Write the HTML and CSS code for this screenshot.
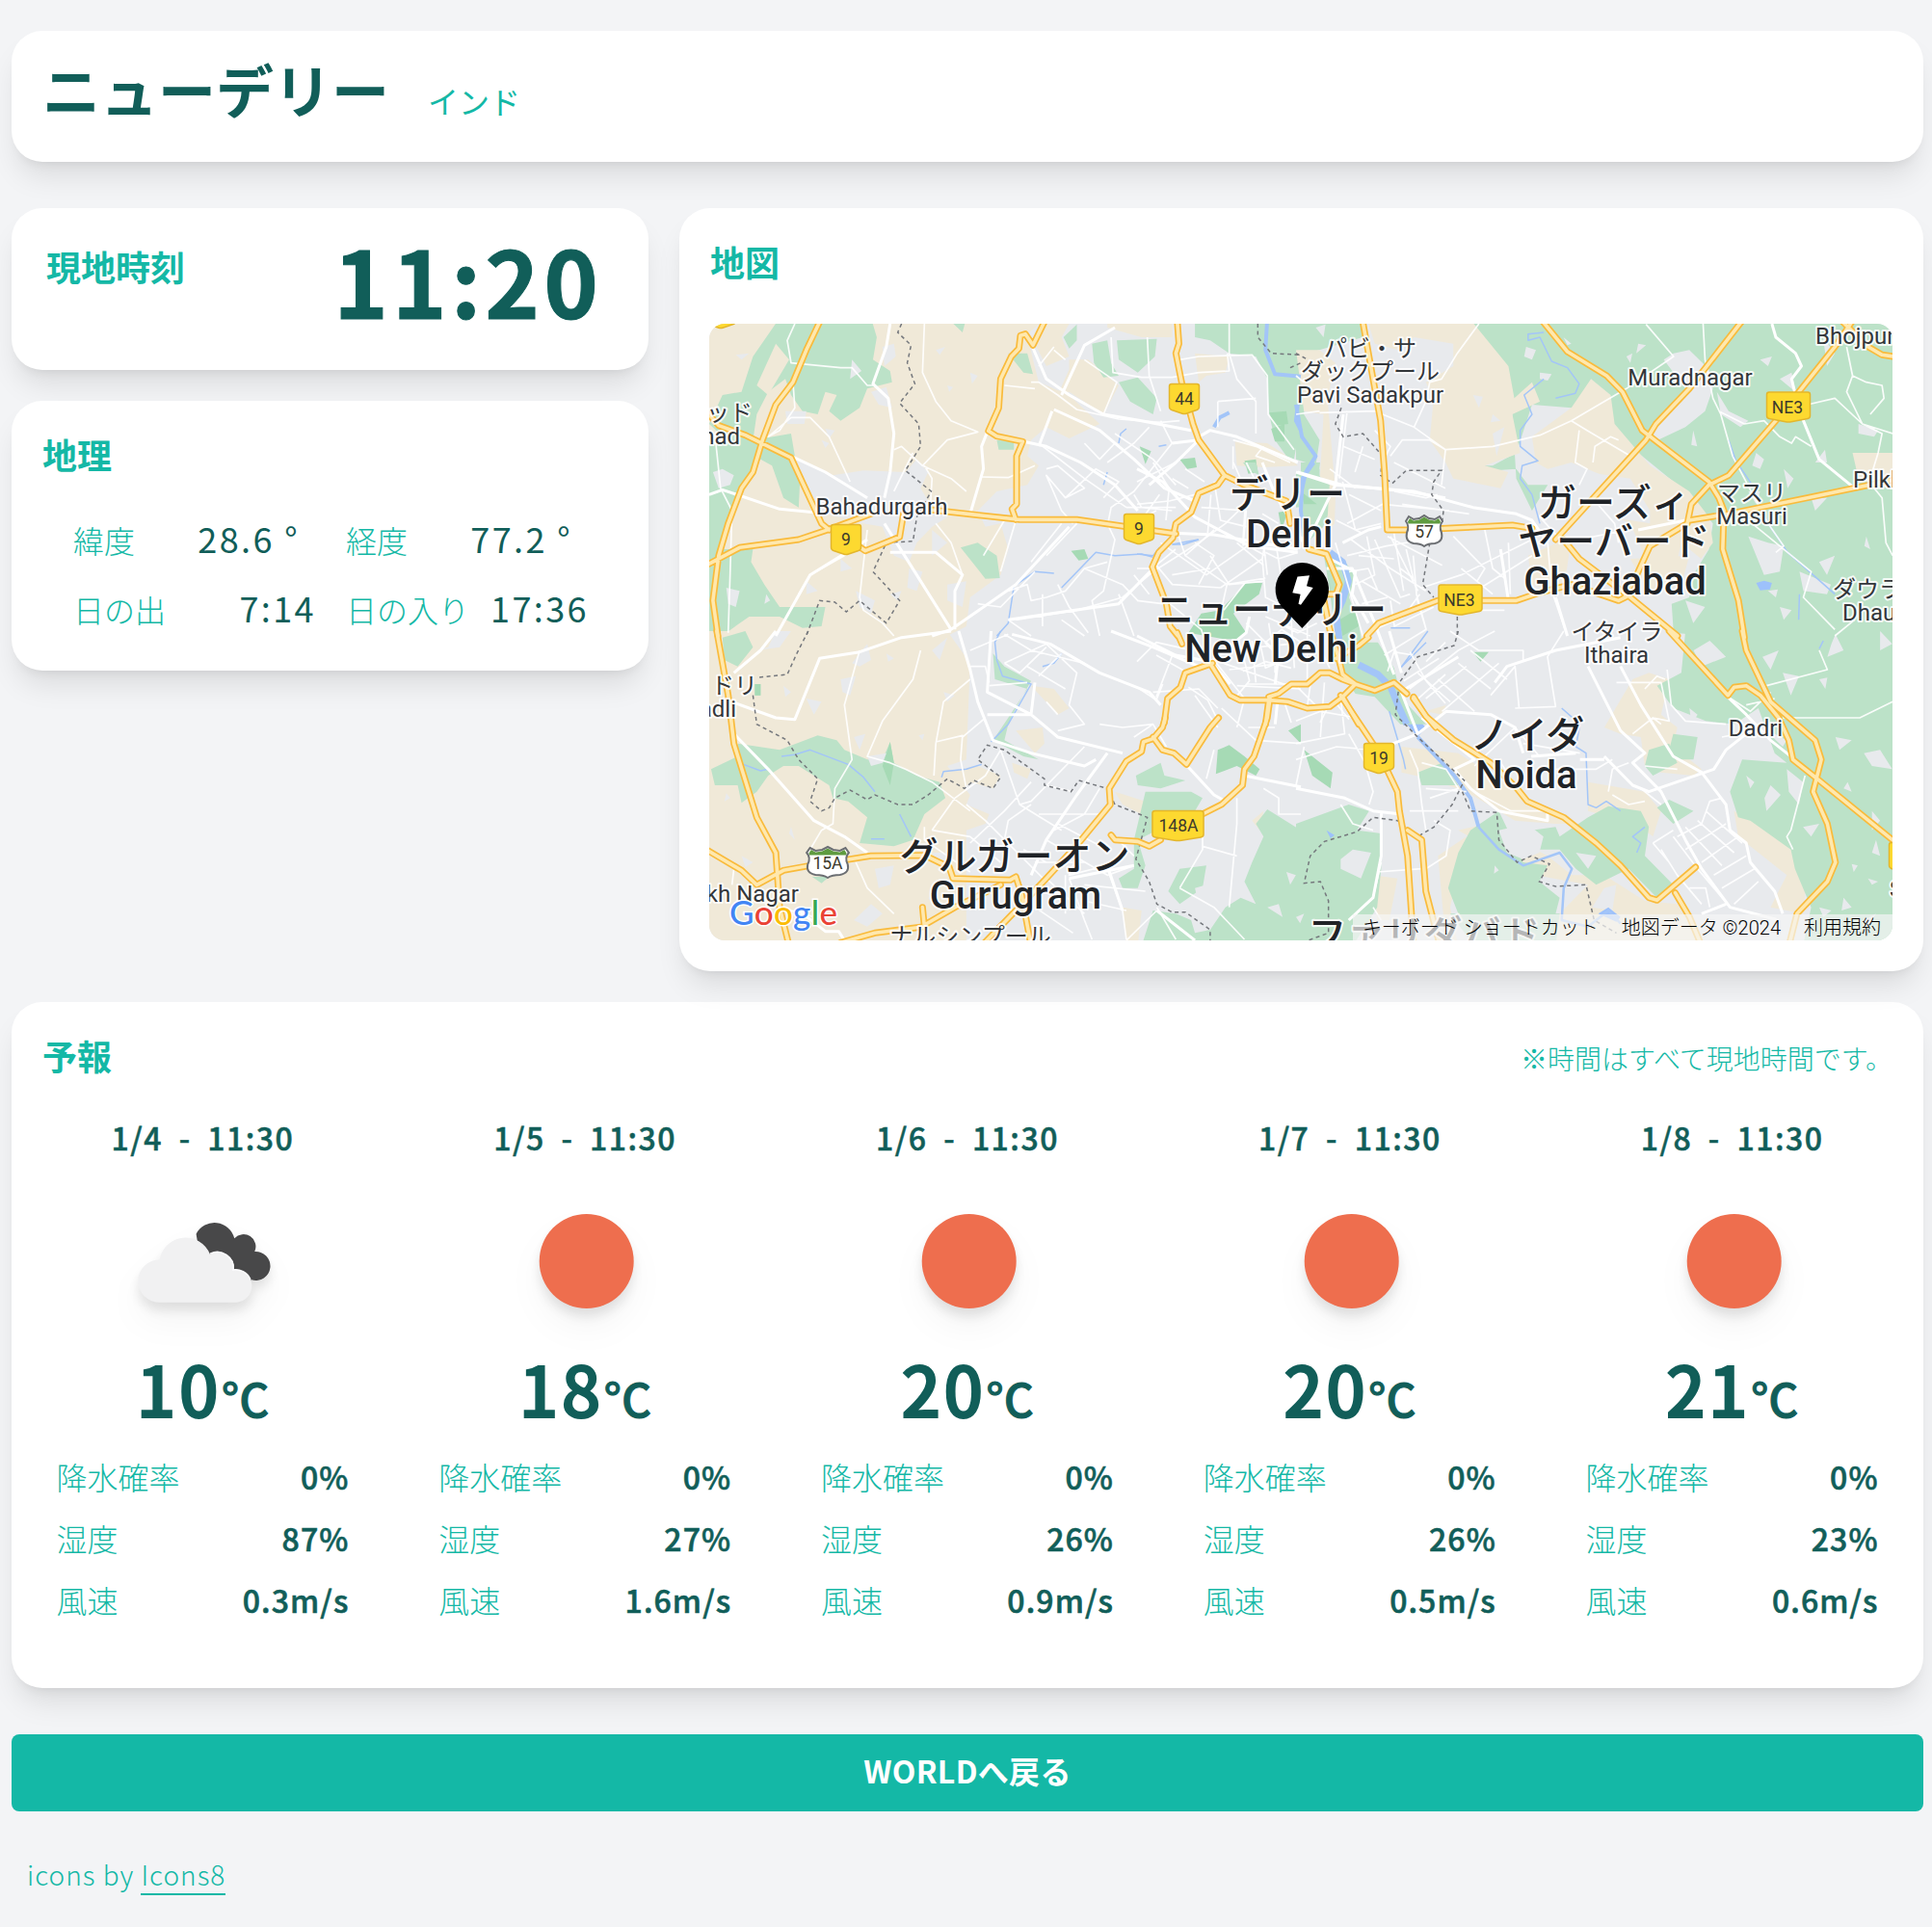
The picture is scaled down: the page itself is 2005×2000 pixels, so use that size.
FILE: index.html
```html
<!DOCTYPE html>
<html lang="ja">
<head>
<meta charset="utf-8">
<title>ニューデリー</title>
<link rel="stylesheet" href="styles.css">
</head>
<body>
<header class="card header">
  <h1 class="city">ニューデリー</h1>
  <span class="country">インド</span>
</header>

<main class="overview">
  <div class="side">
    <section class="card clock">
      <h2 class="heading">現地時刻</h2>
      <span class="time">11:20</span>
    </section>
    <section class="card geo">
      <h2 class="heading">地理</h2>
      <dl class="geo-grid">
        <div class="pair"><dt>緯度</dt><dd class="deg">28.6 °</dd></div>
        <div class="pair"><dt>経度</dt><dd class="deg">77.2 °</dd></div>
        <div class="pair"><dt>日の出</dt><dd>7:14</dd></div>
        <div class="pair"><dt>日の入り</dt><dd>17:36</dd></div>
      </dl>
    </section>
  </div>

  <section class="card map-card">
    <h2 class="heading">地図</h2>
    <div class="map">
      <svg class="map-canvas" viewBox="736 336 1228 640" width="1228" height="640">
        <defs>
          <g id="hw">
            <g transform="translate(730 330) scale(.39541 .33333)">
              <path d="M310 0L270 100 235 200 190 270 155 380 130 480 100 530 65 640 40 740 25 880 38 990M0 280L40 335 110 365 230 435 310 640 330 660M0 775L95 715 250 690 330 658 440 610M400 705L425 725 515 682 525 610M600 598L830 628 980 628 1240 672M900 0L865 85 845 50 832 55 828 95 808 120 780 190 775 280 748 352 770 368 838 385 822 430 822 580 810 595 820 628M1243 0L1248 80 1240 110 1255 200 1285 330 1300 380 1368 490 1350 520 1300 545 1280 605 1240 640 1232 685 1195 730 1178 775 1215 890 1225 960 1245 990M1368 490L1420 520 1530 570 1540 640"/>
            </g>
            <g transform="translate(1345 330) scale(.40816 .33333)">
              <path d="M168 0L190 150 215 320 225 480 232 660H300L550 645 600 655M620 0L690 105 790 180 830 230 880 350 1050 510 1075 560 1088 600 1085 720 1125 880 1140 995M1140 0L1000 220 915 330 890 380 660 690M1420 0L1370 90 1220 320 1100 490 1050 520 1005 580 995 640 900 710 870 790 835 870M1000 630L1100 610 1300 560 1517 505M680 690L720 750 850 870 970 990M180 990L210 950 360 880H560L620 855 700 830 820 880 840 868M1380 0L1455 90 1490 115 1530 122"/>
            </g>
            <g transform="translate(1180 480) scale(.33333)">
              <path d="M535 270L590 285 630 380 620 410 590 410M580 420L600 520 625 600 640 660 680 690 740 710 800 685 840 720M620 610L690 570 720 545M230 630L290 725 320 740 410 740 470 745 530 765 600 760 640 730 680 690M410 730L440 720 480 690 530 690 570 655 600 655 640 675 680 690M235 625L150 655 135 700 95 735 85 810M125 530L140 565M640 730L690 815M860 735L900 790 930 825M410 740L400 815"/>
            </g>
            <g transform="translate(730 655) scale(.39541 .33333)">
              <path d="M1212 270L1205 300 1180 335 1155 345 1150 375 1110 405 1065 490 1068 540 985 660 900 770 820 870 730 980M1180 330L1205 370 1235 380 1268 415 1330 300 1352 270M1487 210L1480 270 1445 390 1420 430 1415 480 1360 540 1310 570M1200 650L1170 670 1140 655 1080 650 1070 635M35 0L65 200 80 350 140 580 190 690 200 860 225 980M0 675L100 745 140 790 210 745 280 730 440 700 580 698 645 735 655 770 805 775 820 765 835 820 860 980M575 860L580 920 450 940 360 970M580 915L660 860 780 790"/>
            </g>
            <g transform="translate(1345 655) scale(.42092 .33333)">
              <path d="M110 200L205 380 250 500 255 560 275 700 290 980M275 620L310 650 320 810 355 980M290 205L320 265 390 340 480 410 545 490 570 530 660 580 740 660 800 730 870 830 890 838 985 735M920 0L1065 200 1080 175 1110 170 1145 200 1190 270 1215 340 1225 400 1290 465 1490 670M1100 0L1110 60 1170 220 1280 340 1295 400 1275 500 1310 600 1330 720 1310 780 1235 880 1215 980M935 815L970 890 1000 980"/>
            </g>
          </g>
          <path id="badge" d="M-13 -15.5H13Q15.500 -15.500 15.500 -13V8Q15.500 10.500 13 11.500L2 15.200Q0 16 -2 15.200L-13 11.500Q-15.500 10.500 -15.500 8V-13Q-15.500 -15.500 -13 -15.500Z"/>
          <path id="badge-wide" d="M-20 -15.500H20Q22.500 -15.500 22.500 -13V9Q22.500 11.500 20 12L3 15.200Q0 16 -3 15.200L-20 12Q-22.500 11.500 -22.500 9V-13Q-22.500 -15.500 -20 -15.500Z"/>
          <g id="route">
            <path class="route-body" d="M-16 -14L-11 -11 -5 -12 0 -15 5 -12 11 -11 16 -14 19 -9Q15 -4 18 3Q20 12 11 14Q4 14 0 17Q-4 14 -11 14Q-20 12 -18 3Q-15 -4 -19 -9Z"/>
            <path class="route-top" d="M-15 -12L-11 -9.500 -5 -10.500 0 -13.500 5 -10.500 11 -9.500 15 -12 17 -8.500 16.500 -6.500H-16.500L-17 -8.500Z"/>
          </g>
        </defs>

        <rect class="urban" x="736" y="336" width="1228" height="640"/>

        <g class="land">
          <g transform="translate(730 330) scale(.39541 .33333)">
            <path class="farm" d="M0 0H900L850 50 865 130 880 200 960 240 1040 330 960 375 900 340 860 380 850 430 880 460 850 520 770 540 720 600 740 650 780 640 800 720 780 800 700 870 690 960 640 990H0ZM960 130H1010L1060 180 1090 210 1050 300 960 230 930 240 960 160ZM900 18H960L940 60 960 120 900 150 870 80ZM1060 18H1230V60H1150L1060 30ZM1290 110L1380 120 1370 170 1320 180 1300 200ZM1395 385L1480 390 1545 440 1560 460 1470 465 1400 460Z"/>
            <path class="park" d="M200 0H440L455 60 445 130 490 165 495 200 430 220 410 280 360 320 330 290 350 240 320 230 300 300 260 290 230 240 215 190 170 230 140 300 130 380 230 360 240 430 255 470 250 590 210 560 180 460 150 440 120 480 100 540 70 620 50 720 130 720 125 760 160 830 200 900 320 900 310 960 260 965 200 930 120 930 60 980 0 990V400L60 380 15 330 50 240 100 230 130 120ZM675 715L720 700 770 740 778 810 740 812ZM770 380L815 385V410H775ZM800 110H850L865 175 840 170ZM640 0H690L680 45ZM945 60L980 20V70L960 95ZM1020 80L1060 70 1070 140 1090 180 1050 185 1025 140ZM1085 70L1190 65 1185 120 1140 170 1090 130ZM1090 200L1140 185 1190 250 1180 300 1120 260ZM1290 0H1568V320L1550 440 1530 430 1500 380 1485 300 1480 190 1450 120 1380 110 1330 70 1290 60Z"/>
            <path class="farm" d="M190 80L225 130 170 240 140 210Z"/>
            <path class="wood" d="M1250 440L1290 435 1295 465 1270 470ZM1145 400L1175 415 1160 455ZM1420 445L1450 440 1455 480 1430 485ZM965 725L1000 720 1010 750 985 755ZM1485 295L1530 290 1535 330 1500 335ZM1490 345L1525 330 1525 385 1500 385Z"/>
            <path class="town" d="M235 430L340 490 420 475 530 480 560 440 590 480 570 530 600 590 640 620 600 650 560 700 540 760 500 740 470 650 420 640 290 600 270 520ZM25 480L50 470 80 490 70 520 40 530ZM215 290L270 290 265 330 220 330ZM470 90L500 80 505 120 475 150ZM85 115L120 110 100 130ZM610 100L635 90 620 115ZM700 170L720 180 705 205ZM320 345L345 350 330 375ZM390 130L415 165 385 190ZM440 230L480 215 495 280 460 270ZM310 380L330 390 320 405ZM640 210L655 215 645 230ZM270 820L300 850 270 860ZM60 840L95 850 85 900 65 890ZM360 750L390 780 360 790ZM540 780L575 790 560 850 535 840ZM640 830L690 820 680 900 640 880ZM165 860L175 880 160 890ZM400 850L450 880 440 920 410 900ZM600 660L640 700 600 740ZM490 860L520 850 510 880Z"/>
          </g>
          <g transform="translate(1345 330) scale(.40816 .33333)">
            <path class="park" d="M440 0H1530V990H1050L960 980 955 890 1000 870 1010 800 1050 720 1060 640 990 540 900 450 850 400 800 360 700 280 600 270 560 420 500 460 430 460 440 480 560 470 590 520 640 520 600 600 560 500 550 300 540 180 500 100 460 50ZM0 0H170V60L30 110 20 150H0ZM0 480L60 470V580L0 590ZM0 150L30 160 20 300 60 380 50 460 0 440Z"/>
            <path class="farm" d="M180 0H440L480 60 540 150 555 250 600 200 620 260 550 300 570 420 480 460 540 480 520 530 400 500 380 450 340 380 350 250 330 200 400 150V80L300 60 260 100 200 80ZM700 280L750 190 800 240 810 330 900 460 1000 540 1050 620 1060 700 1030 750 980 700 960 800 900 780 850 640 780 600 800 500 740 470 700 450 640 470 610 450 600 370ZM0 100H60L100 140 80 250 100 540 60 520 70 300 20 290ZM850 750L1000 740 980 830 900 860ZM1415 420H1530V540L1430 500ZM590 740L700 680 680 860 600 830Z"/>
            <path class="town" d="M935 130L960 110 1000 100 1050 160 1060 220 1040 290 990 340 920 380 900 350 960 280 990 220ZM585 90L610 100 600 130 580 120ZM620 170L650 175 640 195 620 190ZM680 60L700 80 690 85ZM870 80L890 85 865 110ZM840 120L855 110 850 140ZM50 30L75 20 70 60ZM1010 350L1020 400 1005 395ZM1180 130L1210 120 1200 150ZM1340 60L1370 110 1350 150ZM1230 190L1260 170 1270 230ZM1170 420L1190 440 1180 470 1160 460ZM1240 470L1265 500 1250 530ZM1345 410L1350 450 1320 450ZM1310 560L1350 560 1320 600ZM1200 700L1240 710 1230 790 1190 800 1150 680ZM1450 680L1460 720 1445 710ZM1280 790L1360 830 1350 860 1290 850ZM1330 760L1370 740 1350 800ZM990 880L1040 900 1010 950ZM1230 900L1260 910 1240 940ZM1070 230L1100 290 1150 320 1130 340 1080 300ZM1430 330L1480 350 1470 370 1430 360ZM1150 540L1180 540 1170 580ZM500 360L530 340 510 430ZM450 240L475 245 465 280ZM500 300L520 320 495 325ZM740 480L850 500 900 600 900 640 800 620 720 540ZM1200 850L1225 845 1220 870Z"/>
            <path class="lake" d="M1170 825L1190 818 1210 825 1205 845 1180 848Z"/>
          </g>
          <g transform="translate(730 655) scale(.39541 .33333)">
            <path class="farm" d="M0 0H640L700 100 690 400 640 420 700 510 690 540 750 570 740 600 690 620V980H0ZM820 310L890 300 895 350 870 380ZM860 170L920 180 960 240 930 260ZM1080 500L1160 530 1165 580 1100 540ZM1100 860L1150 870 1140 980H1110ZM1440 590L1470 560 1460 620ZM630 440L720 420 780 450 760 490 700 470 680 495ZM810 410L860 430 850 460 815 440Z"/>
            <path class="park" d="M90 350L200 370 300 325 350 340 370 370 430 400 470 400 490 345 500 410 560 450 620 470 635 520 580 570 550 650 500 670 410 660 430 580 380 530 340 520 330 480 250 420 210 420 170 450 140 500 100 535 90 480 30 480 20 430 90 390ZM50 20L110 0 130 50 90 110 55 90ZM135 165H150V200H135ZM760 70L790 110 860 155 820 240 800 290 790 340 880 400 840 390 760 340 800 270 850 180 765 150ZM1135 450L1200 410 1210 450 1265 465 1200 490 1140 480ZM1160 500H1280L1310 520 1290 560 1180 570 1190 620 1140 650 1160 730 1140 800H1100L1090 770 1130 740V650ZM1480 555L1568 620V980H1150L1180 870 1240 880 1280 900 1290 940 1330 930 1370 860 1410 830 1450 850 1420 780 1440 720 1470 640 1450 600ZM1250 740L1320 730 1310 800 1250 850 1220 810ZM285 765H330L310 785Z"/>
            <path class="wood" d="M1350 370L1380 355 1420 390 1460 430 1450 450 1400 420 1345 445ZM1535 310L1568 290V350ZM470 420L490 345 500 410 490 480ZM135 165H150V200H135Z"/>
            <path class="town" d="M140 60L170 50 190 0 230 0 200 50ZM390 100L430 40 440 90 410 110ZM480 70L500 85 485 95ZM600 60L640 20 620 90ZM360 150L400 140 385 200 365 190ZM210 170L230 190 215 205ZM270 210L310 220 290 260ZM630 190L660 200 640 220ZM395 330L425 320 410 370ZM565 325L580 320 575 340ZM60 505L70 520 55 530ZM430 390L480 380 470 410 440 420ZM230 610L240 650 225 630ZM450 740L500 730 490 790 460 800ZM590 830L620 820 600 850ZM395 900L440 850 470 880 430 920ZM100 700L130 720 110 735ZM600 690L640 690 630 730ZM1290 800L1320 790 1300 850ZM1480 860L1510 850 1520 890ZM1530 750L1555 760 1540 790Z"/>
          </g>
          <g transform="translate(1345 655) scale(.42092 .33333)">
            <path class="farm" d="M830 150L870 130 920 150 900 260 940 300 930 360 1000 430 980 450 900 440 860 420 850 330 800 320 760 300ZM260 360L400 380 450 420 620 560 690 600H640L540 590 420 500 330 460 260 440ZM400 620L470 600 620 700 680 760H760L860 840 940 850 1000 980H600L650 880 720 790 590 760ZM1080 560L1200 640 1260 760 1250 880 1170 860 1210 760 1090 640ZM720 470L860 500 900 560 880 640 840 600 720 560ZM350 700L420 640 380 860 400 980H370ZM190 760L250 770 230 900H200ZM320 250L370 230 360 260Z"/>
            <path class="park" d="M960 0H1490V980H1250L1270 860 1230 740 1220 680 1120 590 1090 580 1070 500 1100 400 1210 410 1180 380 1140 240 1080 290 1010 280 930 240 890 170 950 130ZM580 620L640 610 650 640 720 580 770 545 850 560 870 610 860 700 930 790 890 830 820 740 740 790 690 740 650 680 600 680ZM430 620L500 560 560 720 620 730 600 780 650 830 640 880H400L375 800 400 690ZM0 600L130 540 180 560 150 620 210 630V740L200 860 140 980H0ZM930 320L990 330 980 400 940 400 920 370ZM870 370L920 350 940 410 880 450 860 420ZM890 550L920 525 980 560 930 600ZM300 440L360 410 400 480 310 480ZM380 880H650L640 980H440Z"/>
            <path class="wood" d="M20 370L90 440 85 490 40 450ZM435 65H475L455 95Z"/>
            <path class="town" d="M1020 30L1060 80 1000 110 980 60ZM1150 80L1190 60 1170 120ZM1200 130L1240 140 1220 200ZM1290 150L1310 145 1305 180ZM1330 10L1350 60 1310 80 1320 40ZM1440 0L1470 40 1440 60ZM970 240L990 260 975 290ZM1330 330L1370 340 1340 370ZM1400 380L1440 370 1470 430 1420 420ZM1110 450L1130 470 1120 490ZM1170 480L1195 510 1160 560 1155 520ZM1210 430L1250 470 1240 540 1215 500ZM1420 560L1440 590 1420 620ZM1250 610L1290 600 1270 640ZM1360 470L1370 500 1350 490ZM1370 725L1385 730 1375 750ZM1430 650L1440 700 1420 690ZM1410 770L1435 780 1420 790ZM1350 830L1370 860 1345 870ZM1290 860L1320 870 1300 890ZM1400 900L1430 880 1410 920ZM110 710L140 680 185 690 160 770 110 740ZM0 890L20 880 10 910ZM490 730L500 745 488 755ZM500 620L570 600 610 640 600 690 560 710 520 690ZM760 800L790 790 780 870 730 860ZM1150 300L1210 340 1200 360ZM690 690L740 700 720 740Z"/>
            <path class="lake" d="M150 100L230 160 250 200 290 260 320 300 300 330 240 240 225 190 150 125ZM75 620L95 635 85 645ZM745 880L770 860 800 890 790 905Z"/>
          </g>
          <g transform="translate(1180 480) scale(.33333)">
            <path class="park" d="M510 0H570L565 40 600 70V150L580 200 540 240 520 200 510 80ZM580 280L640 300 680 350 660 420 690 500 700 560H750L800 640 810 680 830 740 900 815H820L740 730 680 720 640 660 620 560 610 480 600 400ZM330 0H370L380 40 345 20Z"/>
            <path class="wood" d="M340 375H390L380 410 300 470 340 530 320 550 270 550 160 530 200 470 260 460ZM440 155L470 150 450 210ZM630 490L680 460 690 510 640 540ZM510 90L560 130 520 130Z"/>
            <path class="farm" d="M600 60L620 50 615 190 590 220Z"/>
          </g>
        </g>

        <g class="water">
          <g transform="translate(730 330) scale(.39541 .33333)">
            <path class="river" d="M1480 0L1475 100 1500 175 1568 182M1560 270L1555 320 1568 350"/>
            <path class="river" d="M1340 340L1355 310 1380 295"/>
            <path d="M1230 705L1260 705 1300 690M1180 745L1150 735 1080 740 1030 730 940 840M920 795L870 790 815 835 800 950 770 990M1090 390L1095 360 1110 345M1050 520L1060 480M1195 400L1215 395"/>
          </g>
          <g transform="translate(1345 330) scale(.40816 .33333)">
            <path d="M630 45L590 50 590 70 620 60 650 135 690 155 720 205 710 235 660 250M630 190L580 240 600 300 570 350 570 400 615 445 575 460 570 500 600 550 620 640M1110 430L1160 520 1200 640 1250 730 1370 860M1100 380L1120 450M1280 860L1278 940"/>
            <path class="river" d="M0 270L15 370 50 430 25 480 10 560"/>
          </g>
          <g transform="translate(730 655) scale(.39541 .33333)">
            <path d="M780 0L765 35 770 90 785 140 860 165 800 290 755 345M105 415L150 435 170 430M205 390L240 385 280 370 380 415 420 455 450 500M515 570L545 640M625 455L630 437 690 430 730 415M890 110L920 100 940 70M440 647H475"/>
          </g>
          <g transform="translate(1345 655) scale(.42092 .33333)">
            <path class="river" d="M300 330L390 450 430 520 450 610"/>
            <path class="stream" d="M450 610L500 680 560 730 650 690 680 740 660 800 655 900 720 920 770 870 800 910"/>
            <path d="M325 0L255 120M230 250L265 400 270 430M655 240L700 290 690 360 715 380 720 540 740 550 765 530 800 560M840 690L850 660 830 640 860 610M1290 55L1300 30"/>
          </g>
          <g transform="translate(1180 480) scale(.33333)">
            <path class="river" d="M550 0L515 50 510 150 520 230"/>
            <path class="wide-river" d="M600 280L640 310 658 370 640 430 620 470 630 560M690 630L750 660 790 700 810 750 840 815"/>
            <path d="M0 285L50 290 70 265M110 255L190 240M850 515H790M900 560L820 640"/>
          </g>
        </g>

        <g class="streets">
          <g transform="translate(730 330) scale(.39541 .33333)">
            <path d="M240 18L220 70 230 140 360 155 390 155 430 210 450 210M235 200L240 280 200 350 170 370 230 310 280 310 330 370 385 510M15 550L50 535M30 360L45 530 75 600 70 800 65 980M580 18L575 170 610 260 650 320 720 355 640 380 575 460 520 400 500 410M500 540L550 420M575 460L650 500 690 540M580 460L600 500 595 600M730 495L800 497 870 460M790 210L870 220M430 660L410 870 420 910 470 950 500 990M610 640L650 700 680 800M735 740L790 630M250 860L280 800 370 740 430 690M860 200L880 200 930 240 980 285 1090 315 1200 325 1250 320M920 100L950 130M880 150L920 90M1000 130L1085 200 1050 300M1070 60L1075 170 1150 185 1230 185 1300 170 1380 165 1375 110M1165 60L1170 180 1200 290M1250 130L1300 120 1440 115 1480 180 1482 300 1550 410M1380 18V110L1400 190 1450 260V360M1350 260L1450 250M1350 260V340M1080 360L1180 440 1240 520M1200 320L1230 390 1130 540 1070 590 1060 650M880 390L1000 500 1110 590M900 470L930 460 1000 530 950 560 900 490 940 600 970 640M950 560L1030 470 1090 510 1050 560M1170 340L1130 390 1060 450M1390 400V470M1390 380L1450 400 1540 450M1470 400L1450 430 1500 450M800 850L850 830 860 880 900 870 950 850 1000 780 1060 760M870 790L780 900 720 890M890 860V960M820 940L980 910 1100 870 1180 790 1300 700 1370 640 1440 560M980 640L900 740M1060 640L1080 690 1050 850 1020 880 1040 990M860 760L940 640M820 630L780 790M1000 780L1100 830 1140 880M930 830L960 900 1010 980M1130 800L1170 860M1200 700L1320 800 1440 700 1560 720M1290 700L1340 740 1300 830M1330 740L1380 830 1470 820M1400 700L1470 770M1470 700L1480 800M1230 800L1330 780M1090 860L1130 990M800 940L860 990M940 940L1000 990M1130 550L1150 590 1230 600M1110 590L1240 590M1000 390L1040 440 1080 390"/>
            <path class="main-street" d="M490 18L480 90 445 205 485 250 500 360 490 480 475 560M15 550L50 535 200 595 290 605M230 430L320 480 430 560M745 355L730 400 735 470 700 610M860 80L900 190 960 240 1050 300 1150 320 1280 350M840 385L900 400 990 450 1080 520 1140 600M1080 30L1000 85 940 240M1300 370L1330 350 1400 370 1560 450M475 640L650 970 600 990M430 690L280 800 190 990M490 730L610 730 680 800 660 850V970M650 970L820 830 960 650M800 940L1090 890 1180 780M1230 390L1300 380 1240 450 1170 520M920 285L1040 350 1130 440 1210 530 1290 570M915 290L880 400"/>
          </g>
          <g transform="translate(1345 330) scale(.40816 .33333)">
            <path d="M465 18L410 110 370 190 340 200 330 260 300 340M60 295L200 290 300 340 380 410 500 400 620 365 700 320 840 220M700 320L740 350 850 430M720 350L710 450 740 470 720 520M755 450L760 400 800 370 820 380M130 290L110 500M120 400L200 440M170 400L150 480M240 430L270 380 340 380 380 410 370 520M200 350L240 400 220 450M250 540L330 560 360 550M270 580L440 610M130 640L220 580 390 600M140 690L240 780 330 850M180 680L200 800 150 830M240 680L310 850M280 720L300 820M130 740L230 710 330 690M400 680L480 780 460 820M480 660L500 780 530 810M320 840L420 800 600 690M380 830L470 840 600 740M540 700L545 860M420 780L500 860M100 700L170 990M240 880L250 960 350 900M890 20L960 120 840 220M1035 18L1040 130 1060 250 1080 300 1110 430 1200 640 1240 710 1220 730M1075 290L1140 330 1190 320 1230 370 1260 390 1270 370 1310 400M1300 270L1370 250 1440 330 1517 360M1400 90L1415 180 1400 230 1440 330 1490 360 1480 420 1460 500M1415 180L1450 200 1490 210 1495 250 1460 300M1450 500L1490 560 1500 700 1517 740M1160 640L1250 730 1310 790 1290 870 1370 970M1420 940L1370 990M620 620L680 700 840 660M760 570L810 640 820 700M640 700L650 850 690 990M600 860L560 880M430 910L530 910M0 180L20 200M0 300L60 290"/>
            <path class="main-street" d="M0 480L100 520 300 540 450 590 560 610 600 630 640 700M120 300L100 520 20 720M1210 18L1220 60 1270 110 1285 150 1260 190 1270 240 1290 320 1330 440 1380 490 1420 530M870 660L990 630M660 870L690 990M520 720L540 880"/>
          </g>
          <g transform="translate(730 655) scale(.39541 .33333)">
            <path d="M410 60L370 230 390 400 345 490 340 600 310 620 280 680M570 60L550 150 470 280 430 390 490 410 530 430 600 470 700 560M700 150L630 220 610 350 605 450M610 345L680 325 675 400 690 490M740 270L680 330M780 370L740 450 660 520 600 620M780 370L830 540 860 530 1000 360M860 470L790 560 700 660M900 480L970 500M690 540L740 590 900 780M860 540L800 590 790 650M600 620L700 640 780 720M580 610V650L700 750M400 720L430 800 500 880M790 100L900 40 980 130 960 230 1000 290 930 310M790 100L830 130 900 50M850 110L950 180M880 140L940 70M700 60L800 10M750 170L850 160M790 10L860 60 1000 100M900 220L930 260M1040 290L1100 300 1180 290M1130 330L1180 290 1215 360M1040 490L1000 570 920 620M880 570L1040 570M1060 560L1000 640M930 600L1060 680M1000 640L960 760 1090 720M900 650L1060 760 1130 730M830 540L940 620M840 680L900 720M1080 640L1130 700M1060 740L1100 870 1110 960M960 770L1000 900 1020 960M1000 790L1160 810M1000 840L1110 870M900 770L1000 880M870 860L970 940M950 760V880M870 720L1000 720M1340 90L1560 180M1340 90L1420 210 1400 300M1400 170L1568 180M1360 240L1450 340 1568 350M1180 190L1300 180 1350 240M1290 200L1350 300M1320 460L1340 370M1400 520V600L1380 860M1310 670L1400 700M1310 590V680L1250 800M1250 800L1340 860 1420 960M1470 490L1510 520V570H1568M1190 860L1240 960M1190 870L1110 963M1430 300L1500 300M1440 30L1450 160M1500 10L1500 130M1380 120L1520 100M1360 60L1540 40M230 870L290 890M80 740L75 790M700 110L740 110 750 160"/>
            <path class="main-street" d="M80 130L150 60 190 0M50 210L190 270 240 275 305 85 410 65 520 20 650 0M80 320L170 430 290 590 370 640 430 690M670 0L700 120 720 220 760 340 860 380 1000 420 1030 400M755 0L745 190 860 260 930 330 1100 380M745 260H860L870 160M810 10L910 40 1040 130 1170 190 1200 230M1060 380L980 510 900 650 860 760M1270 420L1340 510 1370 530M1420 450L1568 485M1070 0L1180 50 1300 110M1060 730L1100 870M960 770L1130 730M250 870L320 935 355 935 370 963M1190 870L1290 963"/>
          </g>
          <g transform="translate(1345 655) scale(.42092 .33333)">
            <path d="M0 280L60 250 150 270M0 350L120 320 110 210M70 160L60 330M130 320L170 410 190 500 180 540M0 400L100 360 190 370M20 360L0 480M110 540L140 600 190 620M280 370L300 430 310 540 320 620M200 750L310 740M310 410L370 430 400 490 330 520M320 490L420 500M280 180L400 60 490 0M320 210L420 110M360 250L500 100M400 100L480 180M350 150L440 250M430 60L520 150M380 0L450 60 560 60V90M300 130L380 220M480 200L540 110 550 240M540 240L640 235 620 80 660 0M440 420L540 300M540 300L600 390M560 350L700 380M500 400L520 440M620 560L530 560 440 500M780 510L820 540 860 530M640 430L740 430 780 400M770 500L780 430 820 410M790 160L900 160 920 280 880 270M830 320L880 270 900 290M860 180L890 140 910 150M915 120L925 230 960 280 1060 290M1050 330L1090 320M940 640L1000 600 1020 530 1050 520M960 680L1060 600M930 640L990 740 1070 860M960 610L1050 730M990 590L1080 690M1010 560L1100 660M1000 720L1090 640M1030 760L1110 700M880 660L930 620M900 680L940 760 1000 850M880 660L920 720M970 800L1010 800 1020 860M1050 800L1130 740M1080 850L1140 780M1255 450L1220 620 1210 640 1225 680M1160 170L1310 120 1290 60M1200 270H1300L1390 270 1471 220M1060 200L1120 250 1170 190M1180 210L1110 230M860 420L940 430M190 860L210 900M210 720L190 830 140 890M340 590L380 620 370 700 320 740M280 560L400 560M850 490L900 540"/>
            <path class="main-street" d="M0 490L120 520 190 560 260 570M210 560V700L190 830 130 900M260 190L300 320 370 250 480 260 540 300 560 380M270 180L400 80M300 320L200 370M310 270L440 400 390 430 430 490 500 560 620 590 620 550M490 160L520 110 640 60 800 20M720 110L800 310 860 380 830 410 900 500 960 650 1000 740 1070 860 1190 900M800 110L850 230 930 390 1000 440 1060 540 1070 620 1110 660 1120 720 1180 810 1200 880M760 390L830 480 870 500 1030 430 1060 370 1110 320M700 400L760 400M1060 200L1110 260 1170 340 1230 400M580 390L690 380M230 0L260 130M1000 880L1060 850"/>
          </g>
          <g transform="translate(1180 480) scale(.33333)">
            <path d="M0 60L60 30 120 0M0 130L100 120 180 100M50 0L100 80 90 180M110 50L160 80M150 20L210 60M0 180L60 150M70 100L20 170M230 100L220 220M200 140L340 150 330 260M240 60L260 180 340 200M340 0L370 60M300 0L340 90 330 240M390 160L440 190M200 180L400 290M130 230L150 290 280 380 400 360M120 270L60 320 110 380 260 390M260 390L390 300 400 240M280 380L260 470M150 290L240 210M390 300L400 420 440 440M400 280L440 300 450 370M430 240L440 300 500 280M340 370L270 460M0 430L80 440M90 430L200 520 230 620M0 330L40 330M150 580L60 560 0 620M150 650L60 600M60 730L110 600M0 700L60 740 80 690M160 700L220 740 250 800M330 600L350 680 300 740M330 650L400 620 480 640M380 550L400 640 500 600M410 500L430 630M440 500L500 530 560 500M480 490L490 640M530 500V680M340 500L400 560 450 520 540 580M400 480L540 540M560 560L600 640M500 700L560 760M460 750L480 810M540 690L530 760M340 690H480M620 750L660 800M590 770L570 810M640 60L680 210 760 190M660 100L760 150M620 180L700 220M690 290L800 300M660 340L720 330 750 400M700 370L820 440M740 240L780 330 820 420 850 410M800 220L830 400M860 290L870 410 900 520M780 230L950 320M700 440L780 420M880 410L830 480 740 520M860 360L820 330M770 600L900 520 870 420M900 620L960 560M830 680L940 610M870 740L960 660M850 590L900 680M900 680L960 750M780 650L800 590 860 600M800 0L960 80M600 20L680 80"/>
            <path class="main-street" d="M0 20L80 60 180 170 350 260 500 280M110 220L240 225 500 270M0 540L120 600 230 620 290 690M390 0L430 100 530 270M590 330H670L740 500 800 660M600 300L680 340 670 410 720 500M500 30L640 70 840 90 960 110M640 250L720 210 760 200M430 690L440 600 400 560M230 620L340 530 350 480M440 720L430 815"/>
          </g>
        </g>

        <g class="border-lines">
          <g transform="translate(730 330) scale(.39541 .33333)"><path d="M520 18L510 45 545 85 535 140 555 205 515 265 565 330 570 400 530 475 598 540 560 620 550 695 480 700 445 790 515 880 480 950 410 880 375 915 345 885 305 880 270 990M1455 18V60L1490 110 1568 115M1540 155L1568 140"/></g>
          <g transform="translate(1345 330) scale(.40816 .33333)"><path d="M0 110L30 130M115 280L100 330 120 370 170 360 220 430 215 490 245 515 280 475H370L350 510 345 550 375 600 370 650M340 700L322 830 350 870M410 930V990"/></g>
          <g transform="translate(730 655) scale(.39541 .33333)"><path d="M275 0L245 70 220 135 140 145M130 200L140 290 220 340 250 400 300 460 280 530 310 560 330 550 345 520 385 495 430 525 450 510 510 540H550L590 510 640 460 685 490 710 465 760 490 780 455 720 400 745 355 790 370 895 460V480L965 500 985 465 1060 490 1080 540 1165 580 1135 710 1170 780 1190 850 1230 875H1265L1330 930V963"/></g>
          <g transform="translate(1345 655) scale(.42092 .33333)"><path d="M400 0L390 45 300 80 255 160 245 260 300 330 415 465 385 540 340 610 300 640 250 590 190 580 150 625 70 655 35 700 20 785 60 780 80 840V940L30 963M410 500L430 560 495 565 500 650 545 720 580 700 625 725 600 780 640 795 715 790 735 900 790 940"/></g>
        </g>

        <use href="#hw" class="hw-case"/>
        <use href="#hw" class="hw-core"/>

        <g class="badges">
          <use href="#badge" x="1229" y="414"/><use href="#badge" x="878" y="560"/><use href="#badge" x="1182" y="549"/>
          <use href="#badge" x="1431" y="787"/><use href="#badge-wide" x="1856" y="422.500"/><use href="#badge-wide" x="1515.500" y="622.500"/>
          <use href="#badge-wide" transform="translate(1222.500 857) scale(1.180 1)"/><use href="#badge" x="1976" y="890"/>
          <use href="#badge" x="748" y="325"/>
        </g>
        <use href="#route" x="1478" y="550"/>
        <use href="#route" transform="translate(859 894) scale(1.150 1)"/>
        <g class="badge-text">
          <text x="1229" y="420">44</text><text x="878" y="566">9</text><text x="1182" y="555">9</text><text x="1431" y="793">19</text>
          <text x="1855" y="429">NE3</text><text x="1514.500" y="629">NE3</text><text x="1223" y="863">148A</text>
          <text x="1478" y="558">57</text><text x="859" y="902">15A</text>
        </g>

        <g class="place">
          <text class="end" x="781" y="437">ッド</text><text class="end" x="768" y="461">had</text>
          <text x="915" y="533.500">Bahadurgarh</text>
          <text x="1422" y="370">パビ・サ</text><text x="1422" y="394">ダックプール</text><text x="1422" y="418">Pavi Sadakpur</text>
          <text x="1754" y="400">Muradnagar</text>
          <text class="start" x="1884" y="357">Bhojpur</text>
          <text class="start" x="1923" y="506">Pilkhuwa</text>
          <text x="1818" y="520">マスリ</text><text x="1818" y="544">Masuri</text>
          <text class="start" x="1902" y="620">ダウラ</text><text class="start" x="1912" y="644">Dhaulana</text>
          <text x="1678" y="664">イタイラ</text><text x="1677.500" y="688">Ithaira</text>
          <text x="1822" y="764">Dadri</text>
          <text class="end" x="786" y="720">ドリ</text><text class="end" x="764" y="744">adli</text>
          <text class="end" x="829" y="936">kh Nagar</text>
          <text x="1007" y="980">ナルシンプール</text>
          <text class="start" x="1961" y="931">S</text>
        </g>
        <g class="place city-name">
          <text x="1336" y="527">デリー</text><text x="1338" y="567.500">Delhi</text>
          <text x="1319" y="647">ニューデリー</text><text x="1319" y="687">New Delhi</text>
          <text x="1675" y="536">ガーズィ</text><text x="1675" y="576">ヤーバード</text><text x="1676" y="616.500">Ghaziabad</text>
          <text x="1585" y="777">ノイダ</text><text x="1584" y="817.500">Noida</text>
          <text x="1053" y="903">グルガーオン</text><text x="1054" y="943">Gurugram</text>
          <text x="1478" y="984">ファリダバド</text>
        </g>

        <path class="pin" d="M1351.300 652L1330 629.500A27.700 27.700 0 1 1 1372.600 629.500Z"/>
        <path class="bolt" d="M1346.500 598.500L1359 597.300 1356 608.300 1362.700 610 1350 627.700 1347.500 626.700 1349.600 616.700 1341.300 615.300Z"/>

        <text class="logo" x="757" y="960" textLength="112"><tspan class="g-blue">G</tspan><tspan class="g-red">o</tspan><tspan class="g-yellow">o</tspan><tspan class="g-blue">g</tspan><tspan class="g-green">l</tspan><tspan class="g-red">e</tspan></text>
      </svg>
      <div class="attribution"><span>キーボード ショートカット</span><span>地図データ ©2024</span><span>利用規約</span></div>
    </div>
  </section>
</main>

<section class="card forecast">
  <div class="forecast-head">
    <h2 class="heading">予報</h2>
    <p class="note">※時間はすべて現地時間です。</p>
  </div>
  <div class="days">
    <article class="day">
      <p class="date">1/4 - 11:30</p>
      <svg class="icon" width="200" height="187" viewBox="0 0 200 187">
        <g transform="translate(19.600 46) scale(.33333)">
          <path fill="#484849" d="M222 92A64 64 0 0 1 341 106A38 38 0 0 1 404 147A45 45 0 1 1 395 235L340 240 240 200Z"/>
          <path fill="#f1f1f2" d="M107 305A66 66 0 0 1 108 172A82 82 0 0 1 265 155A50 50 0 0 1 340 203A51 51 0 0 1 348 305Z"/>
          <path fill="none" stroke="#fbfbfd" stroke-width="5" stroke-linecap="round" d="M267 153A50 50 0 0 1 337 204A51 51 0 0 1 390 232"/>
        </g>
      </svg>
      <p class="temp">10<span class="unit">°C</span></p>
      <dl class="stats"><div><dt>降水確率</dt><dd>0%</dd></div><div><dt>湿度</dt><dd>87%</dd></div><div><dt>風速</dt><dd>0.3m/s</dd></div></dl>
    </article>
    <article class="day">
      <p class="date">1/5 - 11:30</p>
      <svg class="icon" width="200" height="187" viewBox="0 0 200 187"><circle cx="101.700" cy="105" r="49" fill="#ee6e4e"/></svg>
      <p class="temp">18<span class="unit">°C</span></p>
      <dl class="stats"><div><dt>降水確率</dt><dd>0%</dd></div><div><dt>湿度</dt><dd>27%</dd></div><div><dt>風速</dt><dd>1.6m/s</dd></div></dl>
    </article>
    <article class="day">
      <p class="date">1/6 - 11:30</p>
      <svg class="icon" width="200" height="187" viewBox="0 0 200 187"><circle cx="101.700" cy="105" r="49" fill="#ee6e4e"/></svg>
      <p class="temp">20<span class="unit">°C</span></p>
      <dl class="stats"><div><dt>降水確率</dt><dd>0%</dd></div><div><dt>湿度</dt><dd>26%</dd></div><div><dt>風速</dt><dd>0.9m/s</dd></div></dl>
    </article>
    <article class="day">
      <p class="date">1/7 - 11:30</p>
      <svg class="icon" width="200" height="187" viewBox="0 0 200 187"><circle cx="101.700" cy="105" r="49" fill="#ee6e4e"/></svg>
      <p class="temp">20<span class="unit">°C</span></p>
      <dl class="stats"><div><dt>降水確率</dt><dd>0%</dd></div><div><dt>湿度</dt><dd>26%</dd></div><div><dt>風速</dt><dd>0.5m/s</dd></div></dl>
    </article>
    <article class="day">
      <p class="date">1/8 - 11:30</p>
      <svg class="icon" width="200" height="187" viewBox="0 0 200 187"><circle cx="101.700" cy="105" r="49" fill="#ee6e4e"/></svg>
      <p class="temp">21<span class="unit">°C</span></p>
      <dl class="stats"><div><dt>降水確率</dt><dd>0%</dd></div><div><dt>湿度</dt><dd>23%</dd></div><div><dt>風速</dt><dd>0.6m/s</dd></div></dl>
    </article>
  </div>
</section>

<a class="back">WORLDへ戻る</a>
<footer class="credit">icons by <a class="credit-link">Icons8</a></footer>
</body>
</html>
```
FILE: styles.css
```css
* { box-sizing: border-box; margin: 0; padding: 0; }
body {
  min-height: 2000px;
  padding: 32px 9px 0 12px;
  background: #f3f4f6;
  color: #115e59;
  font-family: "Noto Sans CJK JP", sans-serif;
  font-size: 32px;
}
.card {
  background: #fff;
  border-radius: 32px;
  box-shadow: 0 20px 30px -6px rgba(0,0,0,.1), 0 8px 12px -8px rgba(0,0,0,.1);
}
.heading { font-size: 36px; line-height: 56px; height: 54px; font-weight: 700; color: #14b8a6; }

.header { display: flex; align-items: baseline; gap: 40px; height: 136px; padding: 20px 32px 0; }
.city { font-size: 60px; line-height: 80px; font-weight: 700; }
.country { font-weight: 400; color: #14b8a6; }

.overview { display: grid; grid-template-columns: 661px 1291px; column-gap: 32px; align-items: start; margin-top: 48px; }
.side { display: grid; gap: 32px; }
.clock { display: flex; justify-content: space-between; align-items: flex-start; height: 168px; padding: 24px 48px 0 36px; }
.clock .heading { margin-top: 8px; }
.time { font-size: 96px; line-height: 99px; font-weight: 700; letter-spacing: 4.2px; -webkit-text-stroke: 1px #115e59; }

.geo { height: 280px; padding: 27px 32px 0; }
.geo-grid { display: grid; grid-template-columns: 252px 252px; column-gap: 31px; margin: 25px 0 0 32px; }
.pair { display: flex; justify-content: space-between; align-items: baseline; height: 72px; line-height: 72px; white-space: nowrap; }
.pair dt { font-weight: 300; color: #14b8a6; }
.pair dd { font-size: 36px; font-weight: 400; letter-spacing: 2.4px; }
.pair .deg { padding-right: 17px; }

.map-card { height: 792px; padding: 27px 32px 0 31px; }
.map-card .heading { padding-left: 1px; }
.map { position: relative; height: 640px; margin-top: 39px; border-radius: 16px; overflow: hidden; }
.map-canvas { display: block; }
.map-canvas path { vector-effect: non-scaling-stroke; }
.urban, .town { fill: #e8eaed; }
.farm { fill: #f0e9d8; }
.park { fill: #bce2c8; }
.wood { fill: #a6dab5; }
.lake { fill: #9dc1fb; }
.water { fill: none; stroke: #a3c5f8; stroke-width: 1.5; stroke-linejoin: round; }
.river { stroke-width: 4; }
.stream { stroke-width: 2.5; }
.wide-river { stroke-width: 7; }
.streets { fill: none; stroke: #fff; stroke-width: 1.7; stroke-linejoin: round; stroke-opacity: .9; }
.main-street { stroke-width: 3; stroke-opacity: 1; }
.border-lines { fill: none; stroke: #75787d; stroke-width: 1.5; stroke-dasharray: 4 3.500; }
.hw-case { fill: none; stroke: #f9bb3c; stroke-width: 7; stroke-linejoin: round; stroke-linecap: round; }
.hw-core { fill: none; stroke: #ffe8ad; stroke-width: 3.6; stroke-linejoin: round; stroke-linecap: round; }
.badges { fill: #fdd930; stroke: #e3b62c; stroke-width: 1.5; }
.badge-text { font: 400 17.5px Roboto, sans-serif; text-anchor: middle; fill: #3c3a2c; }
.route-body { fill: #fff; stroke: #6b6e72; stroke-width: 2; }
.route-top { fill: #5f9b40; }
.place {
  font-family: Roboto, "Noto Sans CJK JP", sans-serif; font-size: 24px; font-weight: 400;
  text-anchor: middle; fill: #33363a; stroke: #fff; stroke-width: 4; stroke-opacity: .85;
  stroke-linejoin: round; paint-order: stroke;
}
.place .start { text-anchor: start; }
.place .end { text-anchor: end; }
.city-name { font-size: 40px; font-weight: 500; fill: #202327; }
.pin { fill: #000; }
.bolt { fill: #fff; }
.logo { font: 500 35px Lato, sans-serif; stroke: #fff; stroke-width: 3; paint-order: stroke; }
.g-blue { fill: #4285f4; }
.g-red { fill: #ea4335; }
.g-yellow { fill: #fbbc04; }
.g-green { fill: #34a853; }
.attribution {
  position: absolute; right: 0; bottom: 0; display: flex; gap: 24px; height: 27px; padding: 0 12px 0 10px;
  background: rgba(245,245,245,.7); color: #000; font: 300 20px/29px Roboto, "Noto Sans CJK JP", sans-serif; white-space: nowrap;
}

.forecast { height: 712px; margin-top: 32px; padding-top: 27px; }
.forecast-head { display: flex; justify-content: space-between; padding: 0 32px; }
.note { font-size: 28px; line-height: 62px; height: 54px; font-weight: 300; color: #14b8a6; }
.days { display: grid; grid-template-columns: repeat(5, 1fr); margin-top: 35px; }
.day { display: flex; flex-direction: column; align-items: center; }
.date { line-height: 49px; height: 48px; font-weight: 500; letter-spacing: 1.5px; word-spacing: 8px; white-space: nowrap; -webkit-text-stroke: .5px #115e59; }
.icon { display: block; overflow: visible; filter: drop-shadow(0 20px 16px rgba(0,0,0,.04)) drop-shadow(0 8px 6px rgba(0,0,0,.1)); }
.temp { height: 96px; font-size: 72px; line-height: 97px; font-weight: 500; letter-spacing: 3px; -webkit-text-stroke: 1.8px #115e59; }
.unit { font-size: 48px; letter-spacing: 0; -webkit-text-stroke: 1px #115e59; }
.stats { width: 304px; margin-top: 13px; }
.stats div { display: flex; justify-content: space-between; height: 64px; line-height: 64px; }
.stats dt { font-weight: 300; color: #14b8a6; }
.stats dd { font-weight: 500; letter-spacing: 1.1px; -webkit-text-stroke: .6px #115e59; }

.back { display: block; height: 80px; margin-top: 48px; border-radius: 8px; background: #14b8a6; color: #fff; text-align: center; line-height: 74px; font-weight: 700; letter-spacing: .3px; }
.credit { margin: 44px 0 0 16px; font-size: 28px; line-height: 42px; font-weight: 300; letter-spacing: 1px; color: #14b8a6; }
.credit-link { display: inline-block; line-height: 40px; border-bottom: 2px solid #14b8a6; }
```
